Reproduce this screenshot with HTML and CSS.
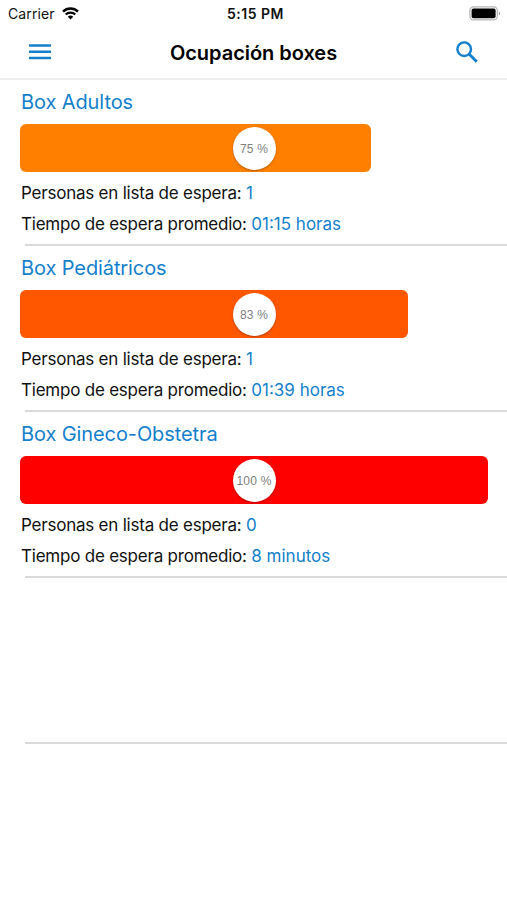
FILE: index.html
```
<!DOCTYPE html>
<html lang="es">
<head>
	<meta charset="UTF-8">
	<meta name="viewport" content="width=device-width, initial-scale=1.0">
	<title>Ocupación boxes</title>

	<link rel="stylesheet" href="styles.css">
</head>
<body>

	<!-- Status bar -->
	<div class="statusbar">
		<div class="carrier">
			<span>Carrier</span>
			<svg class="wifi" viewBox="0 0 17 13" width="17" height="13">
				<path d="M1 4.6a10.8 10.8 0 0 1 15 0" fill="none" stroke="#000" stroke-width="2.5"/>
				<path d="M3.7 7.5a6.9 6.9 0 0 1 9.6 0" fill="none" stroke="#000" stroke-width="2.2"/>
				<path d="M5.8 9.7a4 4 0 0 1 5.4 0L8.5 12.4z"/>
			</svg>
		</div>
		<span class="clock">5:15 PM</span>
		<svg class="battery" viewBox="0 0 32 15" width="32" height="15">
			<rect x=".9" y=".9" width="27.4" height="13" rx="3.6" fill="#fff" stroke="#b5b5b5" stroke-width="1.2"/>
			<rect x="2.6" y="2.6" width="24" height="9.6" rx="1.8"/>
			<path d="M29.8 5.2c1.6.7 1.6 3.7 0 4.4z" fill="#999"/>
		</svg>
	</div>

	<!-- Nav bar -->
	<header class="navbar">
		<svg class="menu" viewBox="0 0 22 16" width="22" height="16">
			<path d="M0 1.5h22M0 7.8h22M0 14h22" stroke="#147fcb" stroke-width="2.5"/>
		</svg>
		<h1>Ocupación boxes</h1>
		<svg class="search" viewBox="0 0 22 22" width="22" height="22">
			<circle cx="8.2" cy="8.2" r="6.8" fill="none" stroke="#147fcb" stroke-width="2.4"/>
			<path d="M13 13l7.8 7.8" stroke="#147fcb" stroke-width="2.9"/>
		</svg>
	</header>

	<!-- Box list -->
	<main class="list">
		<section class="box">
			<h2>Box Adultos</h2>
			<div class="track">
				<div class="bar adultos" style="width: 75%"></div>
				<span class="percent">75 %</span>
			</div>
			<p>Personas en lista de espera: <span>1</span></p>
			<p>Tiempo de espera promedio: <span>01:15 horas</span></p>
		</section>
		<section class="box">
			<h2>Box Pediátricos</h2>
			<div class="track">
				<div class="bar pediatricos" style="width: 83%"></div>
				<span class="percent">83 %</span>
			</div>
			<p>Personas en lista de espera: <span>1</span></p>
			<p>Tiempo de espera promedio: <span>01:39 horas</span></p>
		</section>
		<section class="box">
			<h2>Box Gineco-Obstetra</h2>
			<div class="track">
				<div class="bar gineco" style="width: 100%"></div>
				<span class="percent">100 %</span>
			</div>
			<p>Personas en lista de espera: <span>0</span></p>
			<p>Tiempo de espera promedio: <span>8 minutos</span></p>
		</section>
		<section class="box"></section>
	</main>

</body>
</html>
```
FILE: styles.css
```
:root{
	--themecolor: #147fcb;
	--linecolor: #dadada;
}
*{
	box-sizing: border-box;
}
body {
	font-family: Inter, "Liberation Sans", sans-serif;
	margin: 0;
	height: 900px;
	overflow: hidden;
	background-color: white;
	color: #111;
}

.statusbar {
	display: grid;
	grid-template-columns: 1fr auto 1fr;
	align-items: center;
	height: 26px;
	padding: 0 6px 0 8px;
}
.carrier {
	display: flex;
	align-items: center;
	gap: 7px;
	font-size: 14px;
	line-height: 27px;
	letter-spacing: 0.1px;
}
.clock {
	padding-left: 2px;
	font-size: 14px;
	font-weight: 600;
	line-height: 27px;
	letter-spacing: 0.5px;
}
.battery {
	justify-self: end;
}

.navbar {
	display: flex;
	justify-content: space-between;
	align-items: center;
	height: 54px;
	padding: 0 29px 1px;
	border-bottom: 2px solid #eee;
}
.navbar h1 {
	margin: 0;
	padding-top: 3px;
	font-size: 20px;
	font-weight: 600;
	line-height: 24px;
	letter-spacing: -0.04px;
	color: #000;
}

.box {
	position: relative;
	height: 166px;
	padding: 8px 19px 0 21px;
}
/* inset separator */
.box::after {
	content: "";
	position: absolute;
	left: 25px;
	right: 0;
	bottom: 0;
	height: 2px;
	background-color: var(--linecolor);
}
.box h2 {
	margin: 0 0 8px;
	font-size: 20px;
	font-weight: 400;
	line-height: 28px;
	letter-spacing: -0.1px;
	color: var(--themecolor);
}
.track {
	position: relative;
	height: 48px;
	margin: 0 0 6px -1px;
}
.bar {
	height: 100%;
	border-radius: 6px;
}
.adultos {
	background-color: #ff8000;
}
.pediatricos {
	background-color: #ff5700;
}
.gineco {
	background-color: #ff0000;
}
.percent {
	position: absolute;
	top: 2.5px;
	left: calc(50% - 21.5px);
	width: 43px;
	height: 43px;
	border-radius: 50%;
	background-color: white;
	box-shadow: 0 1px 2px rgba(0, 0, 0, 0.3);
	font: 12px/44px "Liberation Sans", sans-serif;
	letter-spacing: 0.2px;
	text-align: center;
	white-space: nowrap;
	color: #808080;
}
.box p {
	margin: 0;
	font-size: 17px;
	line-height: 31px;
	letter-spacing: -0.22px;
}
.box p span {
	letter-spacing: 0;
	color: var(--themecolor);
}
```
